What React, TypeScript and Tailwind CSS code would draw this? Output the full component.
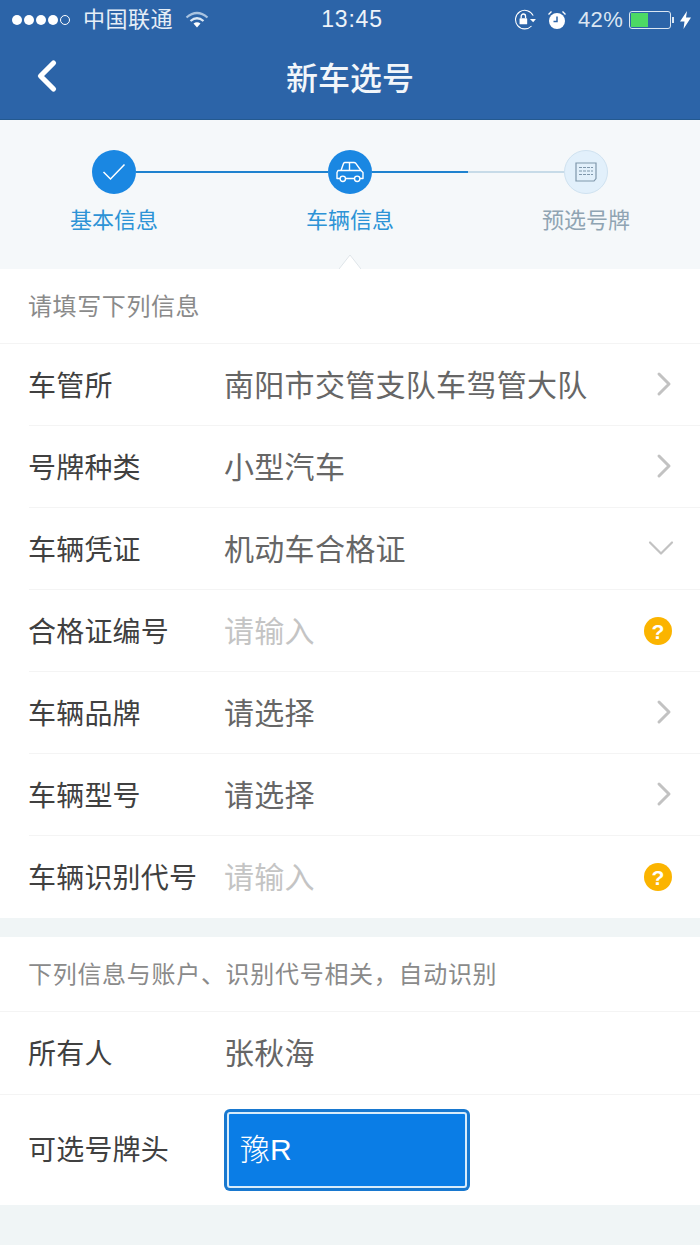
import { ChevronDown, ChevronLeft, ChevronRight } from 'lucide-react';

const FONT = "font-['Liberation_Sans','Noto_Sans_CJK_SC',sans-serif]";

const CarIcon = () => (
  <svg width="30" height="24" viewBox="0 0 30 24" fill="none" stroke="#fff" strokeWidth="1.4" strokeLinejoin="round">
    <path d="M6 10.5 8.5 3.5Q9 2.5 10 2.5H19Q20 2.5 20.8 3.3L26 10.5" />
    <path d="M14.5 2.5V10.5M6 10.5H26L28 12.5V18.5H25M19.5 18.5H10.5M5 18.5H2V12.5L3 10.5H6" />
    <circle cx="7.8" cy="18.8" r="2.7" />
    <circle cx="22.2" cy="18.8" r="2.7" />
  </svg>
);

const PlateIcon = () => (
  <svg width="22" height="20" viewBox="0 0 22 20" fill="none" stroke="#7f97ab" strokeWidth="1.2">
    <path d="M1 1H21V16.5L19 19H1Z" />
    <path d="M4 5.5H18M4 9H18M4 12.5H18" strokeDasharray="3 1" />
  </svg>
);

const StatusBar = () => (
  <div className="flex h-[39px] items-center justify-between pl-[12px] pr-[9px] text-white">
    <div className="flex items-center">
      <div className="flex items-center gap-[2px]">
        <span className="size-[10px] rounded-full bg-white" />
        <span className="size-[10px] rounded-full bg-white" />
        <span className="size-[10px] rounded-full bg-white" />
        <span className="size-[10px] rounded-full bg-white" />
        <span className="size-[10px] rounded-full border border-white" />
      </div>
      <span className="ml-[13px] text-[22px] leading-none tracking-[0.5px] text-[#e6eef7]">中国联通</span>
      <svg className="ml-[12px]" width="24" height="18" viewBox="0 0 24 18" fill="none">
        <path d="M1.5 6.5Q12-2.5 22.5 6.5" stroke="#a9c3e0" strokeWidth="2.2" />
        <path d="M5.5 10Q12 4.5 18.5 10" stroke="#dce8f4" strokeWidth="2.2" />
        <path d="M8.5 12.5Q12 10 15.500 12.500L12 16.500Z" fill="#fff" />
      </svg>
    </div>
    <span className="absolute left-[352px] -translate-x-1/2 text-[23px] leading-none font-medium tracking-[0.8px] text-[#eef3f9]">13:45</span>
    <div className="flex items-center">
      <svg width="24" height="22" viewBox="0 0 22 20" fill="none">
        <path d="M18.5 6A8.500 8.500 0 1 0 17 15.500" stroke="#fff" strokeWidth="1" />
        <path d="M15.500 9H21L18.500 12Z" fill="#fff" />
        <rect x="6" y="8.500" width="7" height="5.500" rx="0.500" fill="#fff" />
        <path d="M7.500 8.500V6.500A2 2 0 0 1 11.500 6.500V8.500" stroke="#fff" strokeWidth="1.200" />
      </svg>
      <svg className="ml-[10px]" width="20" height="20" viewBox="0 0 20 20" fill="none">
        <circle cx="10" cy="11" r="8" fill="#fff" />
        <path d="M10 6.500V11.500H6.500" stroke="#2c64a8" strokeWidth="1.500" />
        <path d="M1.500 4.500 4.500 1.500M18.500 4.500 15.500 1.500" stroke="#fff" strokeWidth="1.400" />
      </svg>
      <span className="ml-[11px] text-[22px] leading-none tracking-[0.3px] text-[#dbe6f2]">42%</span>
      <div className="ml-[6px] flex h-[18px] w-[42px] items-center rounded-[3px] border border-[#dbe6f2] p-[1px]">
        <div className="h-full w-[17px] bg-[#4cd964]" />
      </div>
      <span className="ml-[1px] h-[6px] w-[2px] bg-[#dbe6f2]" />
      <svg className="ml-[6px]" width="11" height="18" viewBox="0 0 11 18">
        <path d="M7 0 0 10.500H4.500L3.500 18 11 6.500H6Z" fill="#fff" />
      </svg>
    </div>
  </div>
);

const Steps = () => (
  <div className="relative h-[149px] bg-[#f5f8fa] pt-[30px]">
    <div className="flex items-center px-[92px]">
      <div className="flex size-[44px] shrink-0 items-center justify-center rounded-full bg-[#1a87e2]">
        <svg width="24" height="18" viewBox="0 0 24 18" fill="none">
          <path d="M1.500 9 8.500 16 22.500 1.500" stroke="#fff" strokeWidth="1.500" />
        </svg>
      </div>
      <div className="h-[2px] w-[192px] bg-[#1f82cf]" />
      <div className="flex size-[44px] shrink-0 items-center justify-center rounded-full bg-[#1a87e2]">
        <CarIcon />
      </div>
      <div className="h-[2px] w-[96px] bg-[#1f82cf]" />
      <div className="h-[2px] flex-1 bg-[#c7dbe8]" />
      <div className="flex size-[44px] shrink-0 items-center justify-center rounded-full border border-[#cfe2f0] bg-[#e2f0fb]">
        <PlateIcon />
      </div>
    </div>
    <div className="mt-[12px] flex justify-between px-[70px] text-[22px] leading-[30px]">
      <span className="text-[#2d93d6]">基本信息</span>
      <span className="text-[#2d93d6]">车辆信息</span>
      <span className="text-[#8fa4b3]">预选号牌</span>
    </div>
    <svg className="absolute bottom-0 left-[339px]" width="22" height="15" viewBox="0 0 22 15">
      <path d="M0 15 11 1 22 15Z" fill="#fff" />
      <path d="M0 15 11 1 22 15" fill="none" stroke="#dfe5e9" strokeWidth="1" />
    </svg>
  </div>
);

type RowProps = {
  label: string;
  value: string;
  muted?: boolean;
  icon?: 'right' | 'down' | 'help';
  last?: boolean;
};

const Row = ({ label, value, muted, icon, last }: RowProps) => (
  <div className="relative flex h-[82px] items-center pr-[28px] pl-[28px]">
    <span className="w-[196px] shrink-0 pt-[4px] text-[28px] leading-none tracking-[0.2px] text-[#404040]">{label}</span>
    <span className={`flex-1 pt-[1px] text-[30px] leading-none tracking-[0.3px] ${muted ? 'text-[#c4c4c4]' : 'text-[#666666]'}`}>{value}</span>
    {icon === 'right' && <ChevronRight size={40} strokeWidth={1.8} color="#c2c2c2" className="mr-[-12px] mt-[-2px]" />}
    {icon === 'down' && <ChevronDown size={44} strokeWidth={1.2} color="#c2c2c2" className="mr-[-11px] mt-[-2px]" />}
    {icon === 'help' && (
      <span className="flex size-[28px] items-center justify-center rounded-full bg-[#fbb400] text-[21px] leading-none font-bold text-white">?</span>
    )}
    {!last && <div className="absolute right-0 bottom-0 left-[29px] h-px bg-[#f4f4f4]" />}
  </div>
);

export default function App() {
  return (
    <div className={`relative h-[1245px] w-[700px] overflow-hidden bg-[#f0f5f6] ${FONT}`}>
      <div className="h-[120px] border-b border-[#24598f] bg-[#2c64a8]">
        <StatusBar />
        <div className="relative flex h-[80px] items-center justify-center">
          <ChevronLeft size={52} strokeWidth={2.4} color="#fff" className="absolute left-[21px] top-[11px]" />
          <span className="text-[32px] leading-none font-medium text-[#f2f6fa]">新车选号</span>
        </div>
      </div>

      <Steps />

      <div className="bg-white">
        <div className="flex h-[75px] items-center border-b border-[#f4f4f4] pl-[28px] pt-[1px] text-[24px] leading-none tracking-[0.6px] text-[#8a8a8a]">
          请填写下列信息
        </div>
        <Row label="车管所" value="南阳市交管支队车驾管大队" icon="right" />
        <Row label="号牌种类" value="小型汽车" icon="right" />
        <Row label="车辆凭证" value="机动车合格证" icon="down" />
        <Row label="合格证编号" value="请输入" muted icon="help" />
        <Row label="车辆品牌" value="请选择" icon="right" />
        <Row label="车辆型号" value="请选择" icon="right" />
        <Row label="车辆识别代号" value="请输入" muted icon="help" last />
      </div>

      <div className="mt-[19px] bg-white">
        <div className="flex h-[75px] items-center border-b border-[#f4f4f4] pl-[28px] pt-[1px] text-[24px] leading-none tracking-[0.7px] text-[#8a8a8a]">
          下列信息与账户、识别代号相关，自动识别
        </div>
        <Row label="所有人" value="张秋海" last />
        <div className="flex h-[111px] items-center border-t border-[#f4f4f4] pl-[28px]">
          <span className="w-[196px] pt-[2px] text-[28px] leading-none tracking-[0.2px] text-[#404040]">可选号牌头</span>
          <div className="h-[82px] w-[246px] rounded-[6px] bg-[#1878cf] p-[3px]">
            <div className="flex h-full items-center rounded-[3px] border-2 border-[#d8ecfb] bg-[#0a7de6] pl-[11px] text-[30px] leading-none font-light text-white">
              豫R
            </div>
          </div>
        </div>
      </div>
    </div>
  );
}
